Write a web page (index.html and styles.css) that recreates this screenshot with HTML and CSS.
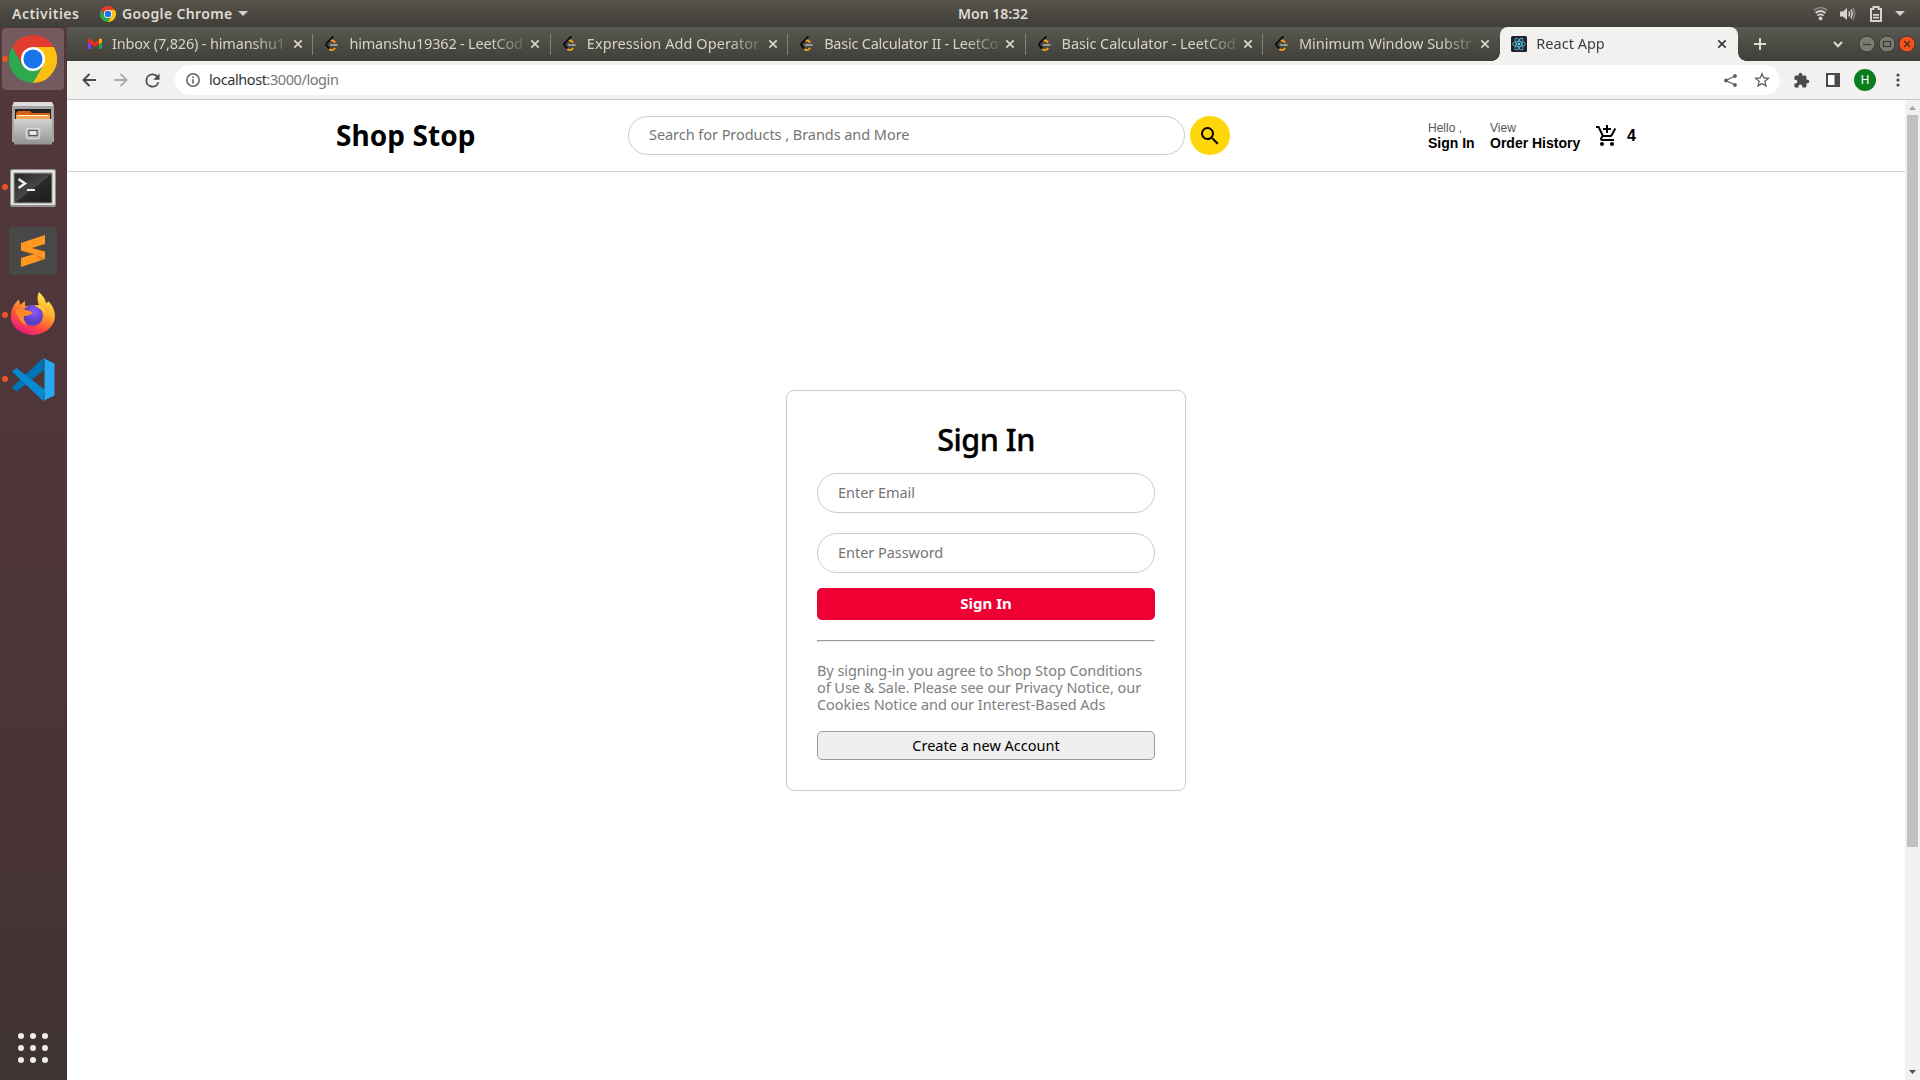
FILE: index.html
```html
<!DOCTYPE html>
<html lang="en">
<head>
<meta charset="utf-8">
<title>React App</title>
<link rel="stylesheet" href="styles.css">
</head>
<body>
<svg class="defs" width="0" height="0">
  <defs>
    <linearGradient id="metal" x1="0" y1="0" x2="0" y2="1"><stop offset="0" stop-color="#d2d2d2"/><stop offset="1" stop-color="#949494"/></linearGradient>
    <linearGradient id="screen" x1="0" y1="0" x2="1" y2="1"><stop offset="0" stop-color="#252525"/><stop offset=".5" stop-color="#474747"/><stop offset=".52" stop-color="#292929"/><stop offset="1" stop-color="#1d1d1d"/></linearGradient>
    <linearGradient id="flame" x1=".8" y1="0" x2=".25" y2="1"><stop offset="0" stop-color="#fff44f"/><stop offset=".4" stop-color="#ffa52b"/><stop offset=".7" stop-color="#ff4a3e"/><stop offset="1" stop-color="#e31587"/></linearGradient>
    <radialGradient id="globe" cx=".6" cy=".3"><stop offset="0" stop-color="#9059ff"/><stop offset="1" stop-color="#5b3ec4"/></radialGradient>
  </defs>
  <symbol id="chrome" viewBox="0 0 48 48">
    <path fill="#e33b2e" d="M3.2 12A24 24 0 0 1 44.800 12H24L13.600 30z"/>
    <path fill="#2da94f" d="M3.200 12A24 24 0 0 0 24 48L34.400 30H13.600z"/>
    <path fill="#fcc010" d="M44.800 12A24 24 0 0 1 24 48L34.400 30 24 12z"/>
    <circle cx="24" cy="24" r="12" fill="#fff"/><circle cx="24" cy="24" r="9.600" fill="#1a73e8"/>
  </symbol>
  <symbol id="leetcode" viewBox="0 0 16 16">
    <path d="M8.800 1 3 6.800Q1.400 8.500 3 10.200L5.400 12.700" fill="none" stroke="#0c0c0c" stroke-width="1.900" stroke-linecap="round"/>
    <path d="M6.800 4.800Q8.600 4 10 5.300L11.300 6.600M5.300 12.800Q8 16 11.300 12" fill="none" stroke="#ffa116" stroke-width="1.800"/>
    <path d="M6.500 9H13.200" stroke="#b3b3b3" stroke-width="1.400" stroke-linecap="round"/>
  </symbol>
  <symbol id="cross" viewBox="0 0 10 10"><path d="M1.300 1.300 8.700 8.700M8.700 1.300 1.300 8.700" stroke="currentColor" stroke-width="1.800"/></symbol>
</svg>

<header class="topbar">
  <span class="activities">Activities</span>
  <span class="appmenu"><svg width="16" height="16"><use href="#chrome"/></svg><span>Google Chrome</span><svg width="10" height="5"><path d="M0 0H10L5 5z" fill="#d2d0cc"/></svg></span>
  <span class="clock">Mon 18:32</span>
  <span class="tray">
    <svg class="wifi" width="15" height="15" viewBox="0 0 15 15" fill="none" stroke="#d5d3cf" stroke-width="1.800"><path d="M1 4.300Q7.500-1 14 4.300" opacity=".45"/><path d="M2.600 7Q7.500 3 12.400 7"/><path d="M4.400 9.600Q7.500 7.200 10.600 9.600"/><circle cx="7.500" cy="12.400" r="1.900" fill="#d5d3cf" stroke="none"/></svg>
    <svg class="sound" width="16" height="14" viewBox="0 0 16 14" fill="none" stroke="#d5d3cf" stroke-width="1.500"><path d="M0 4.500H3L7 1V13L3 9.500H0z" fill="#d5d3cf" stroke="none"/><path d="M8.800 4.500Q10.400 7 8.800 9.500"/><path d="M10.800 2.600Q13.400 7 10.800 11.400"/><path d="M12.800 .8Q16.400 7 12.800 13.200" opacity=".45"/></svg>
    <svg class="battery" width="12" height="16" viewBox="0 0 12 16"><path d="M1 3H3.400V1H8.600V3H11V15H1z" fill="none" stroke="#d5d3cf" stroke-width="2"/><path d="M3 8.800H9M3 11.700H9" stroke="#d5d3cf" stroke-width="1.800"/></svg>
    <svg width="10" height="5"><path d="M0 0H10L5 5z" fill="#d2d0cc"/></svg>
  </span>
</header>

<div class="desktop">
  <nav class="dock">
    <div class="launcher running focused"><svg width="48" height="48"><use href="#chrome"/></svg></div>
    <div class="launcher"><svg width="42" height="44" viewBox="0 0 42 44">
      <path d="M2 1H40L42 5V41H0V5z" fill="#a3a3a3"/><path d="M2 1H40L41.500 5H.5z" fill="#dedede"/>
      <rect x="3" y="8" width="36" height="11" fill="#222"/><path d="M4 12 6 10H18L20 12H38V19H4z" fill="#d95f14"/><path d="M4 14H38V19H4z" fill="#f3a557"/><path d="M6 14.500H36" stroke="#fff1d6"/>
      <path d="M2 18H40V43.500H2z" fill="url(#metal)"/><rect x="14.500" y="27.500" width="13" height="10" rx="2" fill="#aaa" stroke="#d9d9d9" stroke-width="1.500"/><rect x="17" y="29.500" width="8" height="5" fill="#e8e8e8" stroke="#555"/></svg></div>
    <div class="launcher running terminal"><svg width="46" height="38" viewBox="0 0 46 38"><rect width="46" height="38" rx="2" fill="#8f8f8f"/><rect x="1" y="1" width="44" height="35" rx="1.500" fill="#e4e4e4"/><rect x="3.500" y="3.500" width="39" height="31" fill="#999"/><rect x="4.500" y="4.500" width="37" height="29" fill="url(#screen)"/><path d="M8.500 10 15 14.500 8.500 19" fill="none" stroke="#eee" stroke-width="2.500"/><path d="M17 21H25" stroke="#eee" stroke-width="2"/></svg></div>
    <div class="launcher"><svg width="48" height="48" viewBox="0 0 48 48"><rect width="48" height="48" rx="3" fill="#484848"/><path d="M12 16 36 8V17L23 21 36 24.500V32L12 40V31L25 27 12 23.500z" fill="#ff9820"/><path d="M12 23.500 36 31.500V32L32 33 25 27z" fill="#df7d15"/></svg></div>
    <div class="launcher running"><svg width="46" height="46" viewBox="0 0 46 46"><path d="M29 0C33 4 35 6 36 11Q38 11 38 9C44 14 46 22 44.500 28A22.500 20 0 0 1 1 28C0 20 3 12 9 7.500L10 13 15 9V14Q22 14 29 13 26 6 29 0z" fill="url(#flame)"/><circle cx="22.500" cy="23.500" r="10.500" fill="url(#globe)"/><path d="M5 18Q12 15 23 20.500 20 24 14 24 13 28 17 33 10 32 5 18z" fill="#ff8a2a"/><path d="M24 13Q34 13 37 24 34 18 30 17z" fill="#ffd13d"/></svg></div>
    <div class="launcher running"><svg width="43" height="43" viewBox="0 0 43 43"><path d="M31 0 0 29.500 4.500 33.500 32 12z" fill="#0072b8"/><path d="M0 13.500 4.500 10 33 32 31 43z" fill="#078ad1"/><path d="M31 0 42.500 5.500V37.500L31 43Q32.500 42 32.500 39V4Q32.500 1 31 0z" fill="#27a8f2"/></svg></div>
    <div class="apps"><i></i><i></i><i></i><i></i><i></i><i></i><i></i><i></i><i></i></div>
  </nav>

  <div class="browser">
    <div class="tabs">
      <div class="tab"><svg width="16" height="16" viewBox="0 0 16 16"><path d="M1 4V13H4V7z" fill="#7b3ff2"/><path d="M15 4V13H12V7z" fill="#1fa84f"/><path d="M1 3 3 2.500 8 7 13 2.500 15 3V6L8 11 1 6z" fill="#f5281c"/><path d="M12 3.500 13.500 2.500Q15 2.500 15 4V6L12 8z" fill="#fbbc04"/></svg><span class="title t1">Inbox (7,826) - himanshu1</span><svg width="10" height="10"><use href="#cross"/></svg></div>
      <div class="tab"><svg width="16" height="16"><use href="#leetcode"/></svg><span class="title t2">himanshu19362 - LeetCod</span><svg width="10" height="10"><use href="#cross"/></svg></div>
      <div class="tab"><svg width="16" height="16"><use href="#leetcode"/></svg><span class="title t3">Expression Add Operator</span><svg width="10" height="10"><use href="#cross"/></svg></div>
      <div class="tab"><svg width="16" height="16"><use href="#leetcode"/></svg><span class="title t4">Basic Calculator II - LeetCo</span><svg width="10" height="10"><use href="#cross"/></svg></div>
      <div class="tab"><svg width="16" height="16"><use href="#leetcode"/></svg><span class="title t5">Basic Calculator - LeetCod</span><svg width="10" height="10"><use href="#cross"/></svg></div>
      <div class="tab"><svg width="16" height="16"><use href="#leetcode"/></svg><span class="title">Minimum Window Substr</span><svg width="10" height="10"><use href="#cross"/></svg></div>
      <div class="tab active"><svg width="16" height="16" viewBox="0 0 16 16"><rect width="16" height="16" rx="1.500" fill="#20232a"/><g fill="none" stroke="#4fb9d3" stroke-width=".9"><ellipse cx="8" cy="8" rx="6.500" ry="2.500"/><ellipse cx="8" cy="8" rx="6.500" ry="2.500" transform="rotate(60 8 8)"/><ellipse cx="8" cy="8" rx="6.500" ry="2.500" transform="rotate(120 8 8)"/></g><circle cx="8" cy="8" r="1.300" fill="#61dafb"/></svg><span class="title">React App</span><svg width="10" height="10"><use href="#cross"/></svg></div>
      <svg class="plus" width="12" height="12"><path d="M6 0V12M0 6H12" stroke="#dfdbd2" stroke-width="2"/></svg>
      <div class="window-controls">
        <svg class="chev" width="10" height="7"><path d="M1 1 5 5.200 9 1" fill="none" stroke="#dfdbd2" stroke-width="2"/></svg>
        <svg width="18" height="18" viewBox="0 0 18 18"><circle cx="9" cy="9" r="8" fill="#7c7b72" stroke="#393832"/><path d="M5 9.500H13" stroke="#3a3934" stroke-width="1.200"/></svg>
        <svg width="18" height="18" viewBox="0 0 18 18"><circle cx="9" cy="9" r="8" fill="#7c7b72" stroke="#393832"/><rect x="5.500" y="6.500" width="7" height="5" fill="none" stroke="#3a3934" stroke-width="1.200"/></svg>
        <svg width="18" height="18" viewBox="0 0 18 18"><circle cx="9" cy="9" r="8" fill="#f4511d" stroke="#43342c"/><path d="M6 6 12 12M12 6 6 12" stroke="#3f2a20" stroke-width="1.200"/></svg>
      </div>
    </div>
    <div class="toolbar">
      <svg width="14" height="14" viewBox="0 0 14 14" fill="none" stroke="#4a4a4a" stroke-width="2"><path d="M14 7H1.500M7.500 1 1.500 7 7.500 13"/></svg>
      <svg class="fwd" width="14" height="14" viewBox="0 0 14 14" fill="none" stroke="#ababaa" stroke-width="2"><path d="M0 7H12.500M6.500 1 12.500 7 6.500 13"/></svg>
      <svg class="reload" viewBox="0 0 24 24" fill="#4a4a4a"><path d="M17.650 6.350A7.960 7.960 0 0 0 12 4a8 8 0 1 0 7.730 10h-2.080A6 6 0 1 1 12 6c1.660 0 3.140.69 4.220 1.780L13 11h7V4z"/></svg>
      <div class="omnibox">
        <svg width="14" height="14" viewBox="0 0 14 14"><circle cx="7" cy="7" r="6.200" fill="none" stroke="#5f6368" stroke-width="1.500"/><path d="M7 6.200V10.500M7 3.400V5" stroke="#5f6368" stroke-width="1.600"/></svg>
        <span class="url">localhost<span class="dim">:3000/login</span></span>
        <svg class="share" width="13" height="13" viewBox="0 0 13 13"><path d="M11 2 2 6.500 11 11" fill="none" stroke="#5f5f5f" stroke-width="1.300"/><circle cx="11" cy="2" r="1.900" fill="#5f5f5f"/><circle cx="2" cy="6.500" r="1.900" fill="#5f5f5f"/><circle cx="11" cy="11" r="1.900" fill="#5f5f5f"/></svg>
        <svg width="16" height="16" viewBox="2 2 20 20" fill="#5f5f5f"><path d="M22 9.240l-7.190-.62L12 2 9.190 8.630 2 9.240l5.460 4.730L5.820 21 12 17.270 18.180 21l-1.630-7.030L22 9.240zM12 15.400l-3.760 2.270 1-4.280-3.320-2.880 4.380-.38L12 6.100l1.710 4.040 4.380.38-3.320 2.880 1 4.280L12 15.400z"/></svg>
      </div>
      <svg class="ext" width="17" height="17" viewBox="0 0 24 24" fill="#4a4a4a"><path d="M20.500 11H19V7a2 2 0 0 0-2-2h-4V3.500a2.500 2.500 0 0 0-5 0V5H4a2 2 0 0 0-2 2v3.800h1.500a2.700 2.700 0 0 1 0 5.400H2V20a2 2 0 0 0 2 2h3.800v-1.500a2.700 2.700 0 0 1 5.400 0V22H17a2 2 0 0 0 2-2v-4h1.500a2.500 2.500 0 0 0 0-5z"/></svg>
      <svg class="panel" width="14" height="14" viewBox="0 0 14 14"><rect x="1" y="1" width="12" height="12" fill="#fff" stroke="#4a4a4a" stroke-width="2"/><rect x="8.500" y="1" width="4.500" height="12" fill="#4a4a4a"/></svg>
      <span class="avatar">H</span>
      <svg width="4" height="14" fill="#4a4a4a"><circle cx="2" cy="2" r="1.600"/><circle cx="2" cy="7" r="1.600"/><circle cx="2" cy="12" r="1.600"/></svg>
    </div>

    <div class="viewport">
      <div class="page">
        <header class="shop">
          <span class="brand">Shop Stop</span>
          <div class="field search">Search for Products , Brands and More</div>
          <span class="go"><svg width="24" height="24" viewBox="0 0 24 24"><path d="M15.500 14h-.79l-.28-.27A6.470 6.470 0 0 0 16 9.500 6.500 6.500 0 1 0 9.500 16c1.610 0 3.090-.59 4.230-1.570l.27.28v.79l5 4.990L20.490 19l-4.990-5zm-6 0C7.010 14 5 11.990 5 9.500S7.010 5 9.500 5 14 7.010 14 9.500 11.990 14 9.500 14z"/></svg></span>
          <div class="link signin"><span>Hello ,</span><b>Sign In</b></div>
          <div class="link orders"><span>View</span><b>Order History</b></div>
          <svg class="cart" width="24" height="24" viewBox="0 0 24 24"><path d="M11 9h2V6h3V4h-3V1h-2v3H8v2h3v3zm-4 9c-1.100 0-1.990.9-1.990 2S5.900 22 7 22s2-.9 2-2-.9-2-2-2zm10 0c-1.100 0-1.990.9-1.990 2s.89 2 1.990 2 2-.9 2-2-.9-2-2-2zm-9.830-3.250l.03-.12.9-1.630h7.450c.75 0 1.410-.41 1.750-1.030l3.860-7.010L19.420 4h-.01l-1.100 2-2.760 5H8.530l-.13-.27L6.160 6l-.95-2-.94-2H1v2h2l3.600 7.590-1.350 2.450c-.16.28-.25.61-.25.96 0 1.100.9 2 2 2h12v-2H7.420c-.13 0-.25-.11-.25-.25z"/></svg>
          <b class="count">4</b>
        </header>
        <main class="card">
          <h1>Sign In</h1>
          <div class="field">Enter Email</div>
          <div class="field password">Enter Password</div>
          <div class="submit">Sign In</div>
          <hr>
          <p>By signing-in you agree to Shop Stop Conditions<br>of Use &amp; Sale. Please see our Privacy Notice, our<br>Cookies Notice and our Interest-Based Ads</p>
          <div class="create">Create a new Account</div>
        </main>
      </div>
      <div class="scrollbar">
        <svg width="7" height="4"><path d="M3.500 0 7 4H0z" fill="#a3a3a3"/></svg>
        <div class="thumb"></div>
        <svg class="down" width="7" height="4"><path d="M0 0H7L3.500 4z" fill="#505050"/></svg>
      </div>
    </div>
  </div>
</div>
</body>
</html>
```
FILE: styles.css
```css
* { box-sizing: border-box; }
body { margin: 0; width: 1920px; height: 1080px; overflow: hidden; font: 14.5px/17px "Noto Sans", sans-serif; background: #fff; }
svg { display: block; flex: none; }
.defs { position: absolute; }

.topbar { height: 27px; display: flex; align-items: center; background: linear-gradient(#57534b, #403e39); color: #dfdbd2; font-weight: 600; font-size: 14px; white-space: nowrap; }
.activities, .appmenu > span, .clock { padding-bottom: 1px; }
.activities { width: 88px; padding-left: 12px; letter-spacing: .5px; }
.appmenu { width: 870px; display: flex; align-items: center; padding-left: 12px; gap: 6px; letter-spacing: .35px; }
.clock { flex: 1; }
.tray { display: flex; align-items: center; padding-right: 15px; }
.wifi { margin-right: 12px; }
.sound { margin-right: 14px; }
.battery { margin-right: 13px; }

.desktop { display: flex; height: 1053px; }
.dock { width: 67px; flex: none; display: flex; flex-direction: column; background: linear-gradient(#52383b, #4b3438 70%, #3f3334); }
.launcher { position: relative; height: 64px; display: flex; align-items: center; justify-content: center; padding-right: 1px; }
.terminal { padding-top: 2px; }
.focused { background: #725a5e; height: 62px; width: 62px; margin: 1px 0 1px 2px; border-radius: 4px; padding-right: 0; }
.running::before { content: ""; position: absolute; left: 2px; top: 29px; width: 6px; height: 6px; border-radius: 3px; background: #e95420; }
.focused::before { left: 0; top: 28px; }
.apps { margin-top: auto; padding: 0 0 17px 18px; display: grid; grid-template-columns: repeat(3, 6px); gap: 6px; }
.apps i { height: 6px; border-radius: 3px; background: #eeeeec; }

.browser { flex: 1; display: flex; flex-direction: column; min-width: 0; }
.tabs { height: 34px; display: flex; align-items: center; padding-left: 9px; background: linear-gradient(#585950, #403f39); color: #d6d3c9; }
.tab { position: relative; width: 237.4px; height: 34px; display: flex; align-items: center; padding-left: 11px; flex: none; }
.tab:not(.active)::after { content: ""; position: absolute; right: 0; top: 7px; width: 1px; height: 21px; background: #838278; }
.tab:nth-child(6)::after { display: none; }
.title { width: 176px; margin: 0 5px 0 9px; padding-bottom: 2px; white-space: nowrap; -webkit-mask-image: linear-gradient(90deg, #000 80%, rgba(0,0,0,.15)); mask-image: linear-gradient(90deg, #000 80%, rgba(0,0,0,.15)); }
.t1 { letter-spacing: -.17px; }
.t2 { letter-spacing: -.2px; }
.t3 { letter-spacing: .07px; }
.t4 { letter-spacing: -.24px; }
.t5 { letter-spacing: -.08px; }
.active { background: #f2f1f0; border-radius: 8px 8px 0 0; color: #3d3d3d; }
.active::before, .active::after { content: ""; position: absolute; bottom: 0; width: 8px; height: 8px; }
.active::before { left: -8px; background: radial-gradient(circle at 0 0, transparent 7.5px, #f2f1f0 8px); }
.active::after { right: -8px; background: radial-gradient(circle at 100% 0, transparent 7.5px, #f2f1f0 8px); }
.plus { margin-left: 16px; }
.window-controls { margin-left: auto; padding-right: 4px; display: flex; align-items: center; gap: 2px; }
.chev { margin-right: 13px; }

.toolbar { height: 39px; border-bottom: 1px solid #cfccc8; background: #f2f1f0; display: flex; align-items: center; padding-left: 15px; }
.fwd { margin-left: 18px; }
.reload { margin: 0 10px 0 14px; width: 21px; height: 21px; }
.omnibox { width: 1605px; height: 30px; border-radius: 15px; background: #fff; display: flex; align-items: center; padding: 0 10px 0 11px; color: #333; margin-left: 2px; }
.dim { color: #777; }
.url { margin-left: 9px; padding-bottom: 2px; letter-spacing: -.42px; }
.share { margin-left: auto; margin-right: 17px; }
.ext { margin-left: 13px; }
.panel { margin-left: 16px; }
.avatar { width: 22px; height: 22px; border-radius: 11px; margin: 0 20px 0 14px; background: #0a7d1f; color: #fff; text-align: center; font: 12px/22px Roboto, sans-serif; }

.viewport { flex: 1; display: flex; min-height: 0; }
.page { flex: 1; background: #fff; }
.shop { height: 72px; border-bottom: 1px solid #d0d0d0; display: flex; align-items: center; padding: 0 0 1px 269px; }
.brand { width: 292px; font: 700 28px/36px "Noto Sans", sans-serif; color: #000; letter-spacing: .07px; }
.field { height: 40px; border: 1px solid #ccc; border-radius: 20px; display: flex; align-items: center; padding: 0 0 2px 20px; color: #757575; letter-spacing: -.04px; }
.search { width: 557px; height: 39px; padding-bottom: 1px; letter-spacing: -.05px; }
.go { width: 40px; height: 39px; margin-left: 5px; border-radius: 50%; background: #ffd60a; display: flex; align-items: center; justify-content: center; }
.go svg { margin-top: 1px; }
.link { display: flex; flex-direction: column; padding-top: 2px; font: 12px/15px "Liberation Sans", sans-serif; color: #555; }
.link b { font-size: 14px; color: #000; white-space: nowrap; }
.signin { margin-left: 198px; width: 62px; }
.orders { width: 105px; }
.cart { margin-top: 2px; }
.count { margin: 1px 0 0 8px; font: 700 16px/18px "Liberation Sans", sans-serif; }

.card { width: 400px; height: 401px; margin: 218px auto 0; border: 1px solid #ccc; border-radius: 8px; padding: 29px 30px; }
h1 { margin: 0; height: 53px; text-align: center; font: 500 30.5px/38px "Noto Sans", sans-serif; letter-spacing: -.45px; -webkit-text-stroke: .4px #000; }
.password { margin-top: 20px; }
.submit { height: 32px; margin-top: 15px; padding-bottom: 1px; border-radius: 5px; background: #ef0033; color: #fff; font-weight: 700; font-size: 15px; display: flex; align-items: center; justify-content: center; }
hr { margin: 20px 0; }
.card p { margin: 0; color: #808080; letter-spacing: -.055px; white-space: nowrap; }
.create { height: 29px; margin-top: 18px; border: 1px solid #9a9a9a; border-radius: 5px; background: #efefef; color: #000; display: flex; align-items: center; justify-content: center; }

.scrollbar { width: 15px; background: #f1f1f1; display: flex; flex-direction: column; align-items: center; padding: 6px 0; }
.thumb { width: 11px; height: 732px; margin-top: 5px; background: #c1c1c1; }
.down { margin-top: auto; }
```
